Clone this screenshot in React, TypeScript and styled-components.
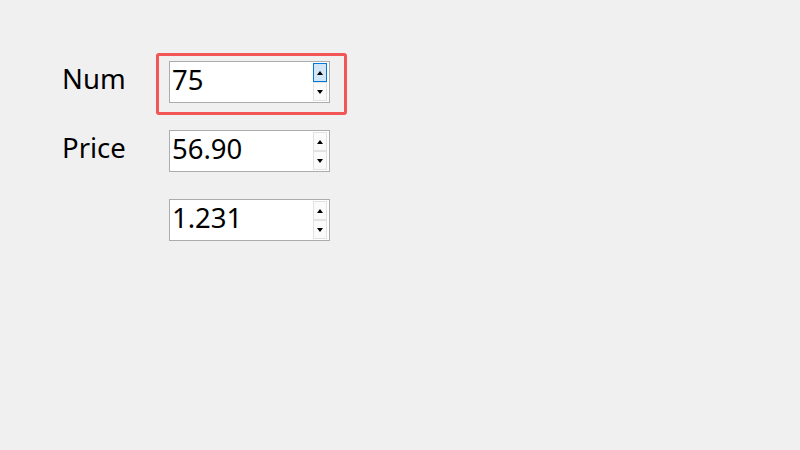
import React from "react";
import styled, { createGlobalStyle } from "styled-components";

const GlobalStyle = createGlobalStyle`
  html, body {
    margin: 0;
    padding: 0;
    background: #f0f0f0;
  }

  #root {
    width: 800px;
    height: 450px;
    overflow: hidden;
  }
`;

interface SpinRow {
  label?: string;
  value: string;
  focused?: boolean;
}

const rows: SpinRow[] = [
  { label: "Num", value: "75", focused: true },
  { label: "Price", value: "56.90" },
  { value: "1.231" },
];

function SpinBox({ value, focused }: { value: string; focused?: boolean }) {
  return (
    <s.Field $focused={focused}>
      <s.Box>
        <s.Text defaultValue={value} readOnly />
        <s.Steps>
          <s.Step $active={focused}>
            <s.Arrow $dir="up" />
          </s.Step>
          <s.Step>
            <s.Arrow $dir="down" />
          </s.Step>
        </s.Steps>
      </s.Box>
    </s.Field>
  );
}

export default function App() {
  return (
    <>
      <GlobalStyle />
      <s.Page>
        <s.Form>
          {rows.map(({ label, value, focused }, key) => (
            <React.Fragment key={key}>
              <s.Label>{label ?? ""}</s.Label>
              <SpinBox value={value} focused={focused} />
            </React.Fragment>
          ))}
        </s.Form>
      </s.Page>
    </>
  );
}

const s = {
  Page: styled.div`
    width: 800px;
    height: 450px;
    box-sizing: border-box;
    padding: 61px 0 0 62px;

    background: #f0f0f0;
    font-family: "Noto Sans", "Open Sans", sans-serif;
  `,
  Form: styled.div`
    display: grid;
    grid-template-columns: 107px 161px;
    grid-auto-rows: 42px;
    row-gap: 27px;
    align-items: stretch;
  `,
  Label: styled.div`
    display: flex;
    align-items: center;
    padding-bottom: 7px;
    box-sizing: border-box;

    font-size: 27.5px;
    color: #000;
  `,
  Field: styled.div<{ $focused?: boolean }>`
    position: relative;

    &::before {
      content: "";
      display: ${({ $focused }) => ($focused ? "block" : "none")};
      position: absolute;
      top: -8px;
      left: -13px;
      right: -17px;
      bottom: -12px;
      border: 3px solid #f25656;
      border-radius: 3px;
      pointer-events: none;
    }
  `,
  Box: styled.div`
    display: flex;

    width: 161px;
    height: 42px;
    box-sizing: border-box;

    border: 1px solid #acacac;
    background: #fff;
  `,
  Text: styled.input`
    flex: 1;
    min-width: 0;

    padding: 0 0 6px 2px;
    border: none;
    outline: none;
    background: transparent;

    font-family: "Noto Sans", "Open Sans", sans-serif;
    font-size: 27.5px;
    color: #000;
  `,
  Steps: styled.div`
    display: flex;
    flex-direction: column;

    width: 14px;
    padding: 1px 2px 1px 0;
  `,
  Step: styled.div<{ $active?: boolean }>`
    display: flex;
    justify-content: center;
    align-items: center;

    height: 19px;
    box-sizing: border-box;

    border: 1px solid ${({ $active }) => ($active ? "#0078d7" : "#e2e2e2")};
    background: ${({ $active }) => ($active ? "#d3e6f6" : "#fbfbfb")};
  `,
  Arrow: styled.span<{ $dir: "up" | "down" }>`
    width: 0;
    height: 0;

    border-left: 3.5px solid transparent;
    border-right: 3.5px solid transparent;
    ${({ $dir }) => ($dir === "up" ? "border-bottom: 4px solid #000;" : "border-top: 4px solid #000;")}
  `,
};
